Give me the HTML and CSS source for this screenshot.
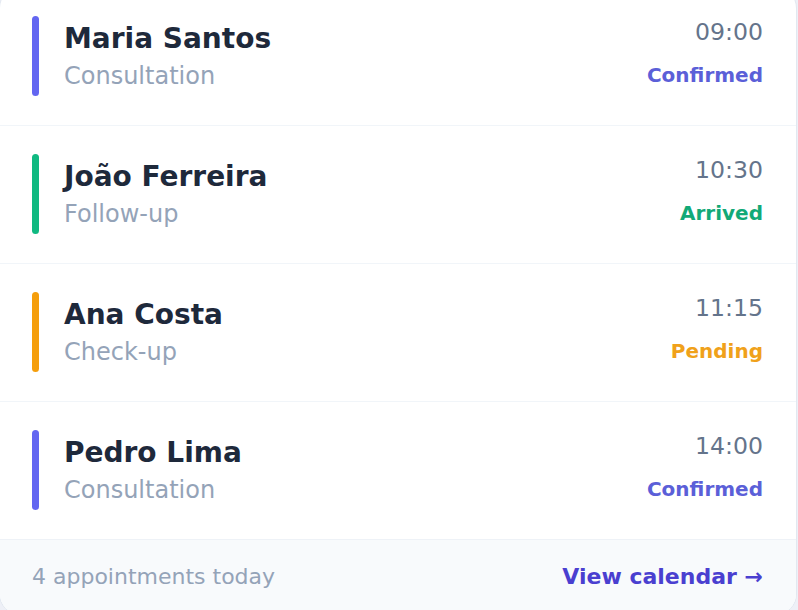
FILE: index.html
```html
<!DOCTYPE html>
<html lang="en">
<head>
    <meta charset="UTF-8">
    <meta name="viewport" content="width=device-width, initial-scale=1.0">
    <title>Today's Appointments</title>
    <link rel="stylesheet" href="styles.css">
</head>
<body>
    <div class="appt-card">
        <div class="appt-row">
            <span class="appt-bar bar-confirmed"></span>
            <div class="appt-info">
                <div class="appt-name">Maria Santos</div>
                <div class="appt-type">Consultation</div>
            </div>
            <div class="appt-meta">
                <div class="appt-time">09:00</div>
                <div class="appt-status status-confirmed">Confirmed</div>
            </div>
        </div>

        <div class="appt-row">
            <span class="appt-bar bar-arrived"></span>
            <div class="appt-info">
                <div class="appt-name">João Ferreira</div>
                <div class="appt-type">Follow-up</div>
            </div>
            <div class="appt-meta">
                <div class="appt-time">10:30</div>
                <div class="appt-status status-arrived">Arrived</div>
            </div>
        </div>

        <div class="appt-row">
            <span class="appt-bar bar-pending"></span>
            <div class="appt-info">
                <div class="appt-name">Ana Costa</div>
                <div class="appt-type">Check-up</div>
            </div>
            <div class="appt-meta">
                <div class="appt-time">11:15</div>
                <div class="appt-status status-pending">Pending</div>
            </div>
        </div>

        <div class="appt-row">
            <span class="appt-bar bar-confirmed"></span>
            <div class="appt-info">
                <div class="appt-name">Pedro Lima</div>
                <div class="appt-type">Consultation</div>
            </div>
            <div class="appt-meta">
                <div class="appt-time">14:00</div>
                <div class="appt-status status-confirmed">Confirmed</div>
            </div>
        </div>

        <div class="appt-footer">
            <span class="appt-count">4 appointments today</span>
            <a href="#" class="appt-link">View calendar →</a>
        </div>
    </div>
</body>
</html>
```

FILE: styles.css
```css
body {
    font-family: 'DejaVu Sans', Verdana, sans-serif;
    background-color: #eef0f7;
    color: #1e293b;
    margin: 0;
    overflow: hidden;
}
.appt-card {
    box-sizing: border-box;
    width: 798px;
    margin: -13px 0 0 -1px;
    background-color: #ffffff;
    border: 1px solid #e2e8f0;
    border-radius: 21px;
    overflow: hidden;
}
.appt-row {
    display: flex;
    align-items: center;
    padding: 28px 33px 29px 32px;
    border-bottom: 1px solid #f1f5f9;
}
.appt-bar {
    width: 7px;
    height: 80px;
    border-radius: 4px;
    flex-shrink: 0;
}
.bar-confirmed { background-color: #6366f1; }
.bar-arrived { background-color: #10b981; }
.bar-pending { background-color: #f59e0b; }
.appt-info {
    flex: 1;
    margin-left: 25px;
    padding-top: 2px;
}
.appt-name {
    font-size: 28px;
    font-weight: 700;
    line-height: 36px;
    color: #1e293b;
}
.appt-type {
    font-size: 24px;
    line-height: 33px;
    margin-top: 3px;
    color: #94a3b8;
}
.appt-meta {
    align-self: flex-start;
    text-align: right;
}
.appt-time {
    font-size: 23.6px;
    line-height: 32px;
    color: #64748b;
}
.appt-status {
    font-size: 20px;
    font-weight: 700;
    line-height: 26px;
    margin-top: 14px;
}
.status-confirmed { color: #5b5fd8; }
.status-arrived { color: #12a977; }
.status-pending { color: #f0a11a; }
.appt-footer {
    display: flex;
    justify-content: space-between;
    align-items: center;
    padding: 22px 33px 22px 32px;
    background-color: #f8fafc;
    border-top: 1px solid #eef2f7;
    margin-top: -1px;
    font-size: 22px;
    line-height: 30px;
}
.appt-count {
    color: #94a3b8;
}
.appt-link {
    color: #4a3fd0;
    font-weight: 700;
    text-decoration: none;
}
```
